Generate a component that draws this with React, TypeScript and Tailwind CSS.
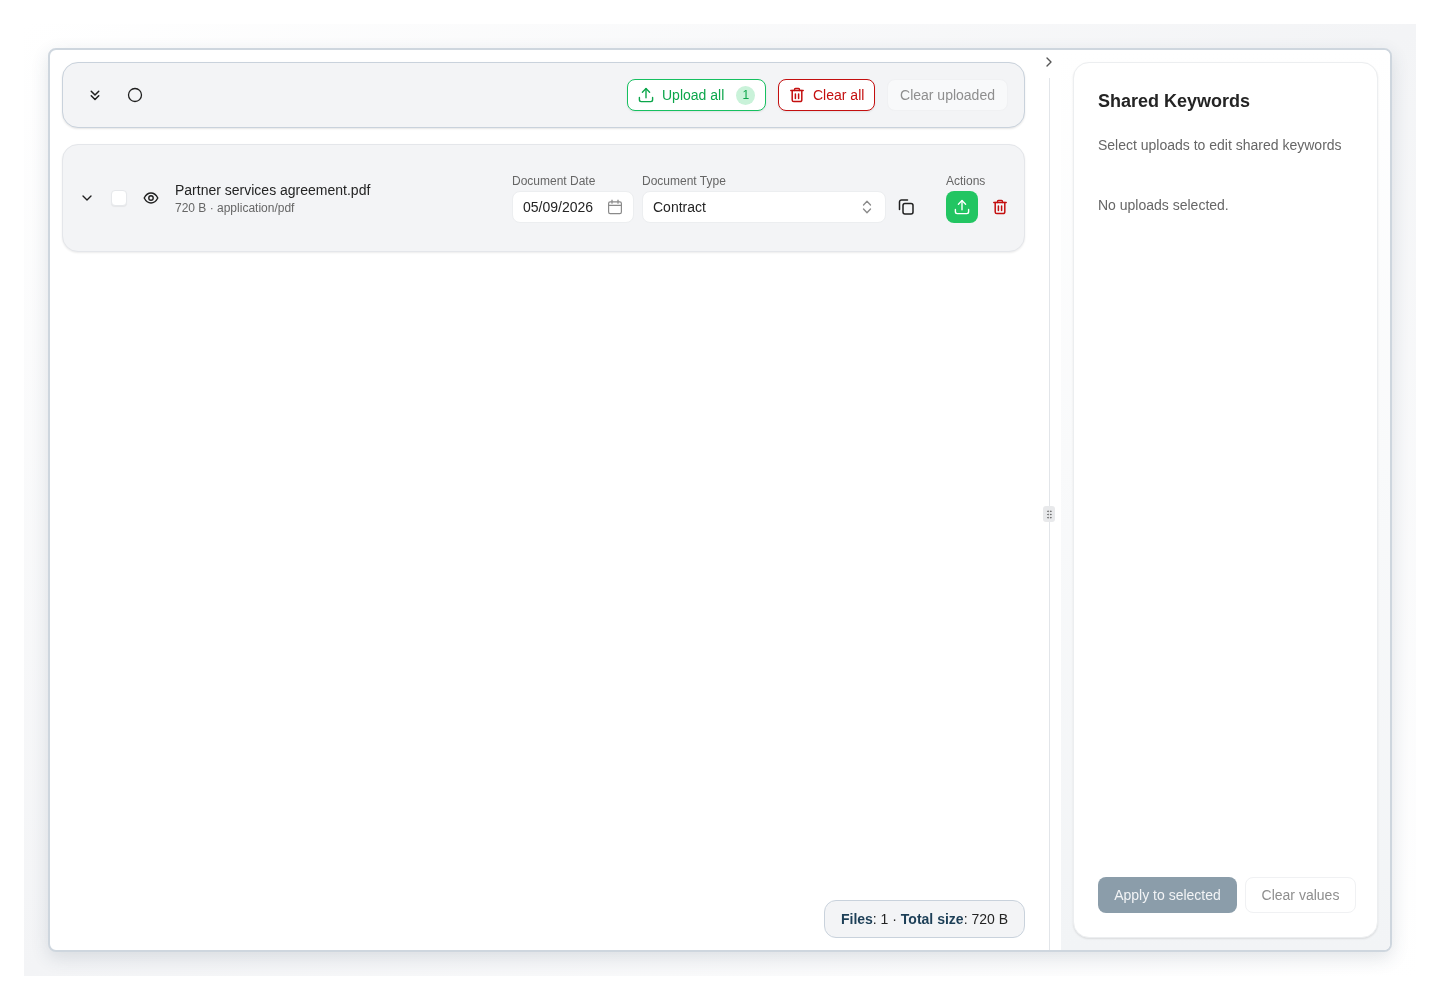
import {
  TbChevronDown,
  TbChevronRight,
  TbChevronsDown,
  TbGripVertical,
} from 'react-icons/tb';

function UploadIcon({ className }: { className: string }) {
  return (
    <svg viewBox="0 0 16 16" fill="none" stroke="currentColor" strokeWidth="1.4" strokeLinecap="round" strokeLinejoin="round" className={className}>
      <path d="M1.4 10.5v2.3a1.8 1.8 0 0 0 1.8 1.8h9.6a1.8 1.8 0 0 0 1.8-1.8v-2.3" />
      <path d="M8 10.8V1.6" />
      <path d="M4.4 5.2 8 1.6l3.6 3.6" />
    </svg>
  );
}

function TrashIcon({ className }: { className: string }) {
  return (
    <svg viewBox="0 0 16 16" fill="none" stroke="currentColor" strokeWidth="1.5" strokeLinecap="round" strokeLinejoin="round" className={className}>
      <path d="M1.8 3.5h12.4" />
      <path d="M5.5 3.5v-1a1 1 0 0 1 1-1h3a1 1 0 0 1 1 1v1" />
      <path d="M3.2 3.5V13a1.6 1.6 0 0 0 1.6 1.6h6.4a1.6 1.6 0 0 0 1.6-1.6V3.5" />
      <path d="M6.4 7v4.4" />
      <path d="M9.6 7v4.4" />
    </svg>
  );
}

function CopyIcon({ className }: { className: string }) {
  return (
    <svg viewBox="0 0 16 16" fill="none" stroke="currentColor" strokeWidth="1.5" strokeLinecap="round" strokeLinejoin="round" className={className}>
      <rect x="5" y="4.5" width="10" height="10.5" rx="2" />
      <path d="M1.5 10.5V3a2 2 0 0 1 2-2h6" />
    </svg>
  );
}

function CalendarIcon({ className }: { className: string }) {
  return (
    <svg viewBox="0 0 16 16" fill="none" stroke="currentColor" strokeWidth="1.2" strokeLinecap="round" strokeLinejoin="round" className={className}>
      <rect x="1.6" y="2.8" width="12.8" height="11.8" rx="1.6" />
      <path d="M1.6 6.4h12.8" />
      <path d="M5 1.2v3" />
      <path d="M11 1.2v3" />
    </svg>
  );
}

function SelectorIcon({ className }: { className: string }) {
  return (
    <svg viewBox="0 0 16 16" fill="none" stroke="currentColor" strokeWidth="1.3" strokeLinecap="round" strokeLinejoin="round" className={className}>
      <path d="M4.5 6 8 2.2 11.5 6" />
      <path d="M4.5 10 8 13.8l3.5-3.8" />
    </svg>
  );
}

function EyeIcon({ className }: { className: string }) {
  return (
    <svg viewBox="0 0 16 16" fill="none" stroke="currentColor" strokeWidth="1.4" strokeLinecap="round" strokeLinejoin="round" className={className}>
      <path d="M1.2 8C3 4.5 5.4 3 8 3s5 1.5 6.8 5C13 11.5 10.6 13 8 13S3 11.5 1.2 8Z" />
      <circle cx="8" cy="8" r="2.2" />
    </svg>
  );
}

function Toolbar() {
  return (
    <div className="flex h-[66px] shrink-0 items-center rounded-2xl border border-[#c9d2dc] bg-[#f3f4f6] pr-[16px] pl-[23px] shadow-[0_1px_2px_rgba(0,0,0,0.1)]">
      <TbChevronsDown className="h-[18px] w-[18px] text-[#1f1f1f]" />
      <svg viewBox="0 0 16 16" fill="none" stroke="currentColor" strokeWidth="1.3" className="ml-[23px] h-4 w-4 text-[#1f1f1f]">
        <circle cx="8" cy="8" r="6.5" />
      </svg>
      <button className="ml-auto flex h-8 w-[139px] items-center rounded-lg border border-[#16c060] bg-white pl-[10px] text-sm text-[#0ca64b] shadow-[0_1px_2px_rgba(0,0,0,0.08)]">
        <UploadIcon className="h-4 w-4" />
        <span className="ml-2">Upload all</span>
        <span className="ml-3 flex h-[19px] w-[19px] items-center justify-center rounded-full bg-[#c9f2d9] text-xs">1</span>
      </button>
      <button className="ml-3 flex h-8 w-[97px] items-center rounded-lg border border-[#c40f0f] bg-white pl-[10px] text-sm text-[#c40f0f] shadow-[0_1px_2px_rgba(0,0,0,0.08)]">
        <TrashIcon className="h-4 w-4" />
        <span className="ml-2">Clear all</span>
      </button>
      <button className="ml-3 flex h-[32px] w-[121px] items-center justify-center rounded-lg border border-[#f0f1f3] bg-[#f8f9fa] text-sm text-[#8e8e8e]">
        Clear uploaded
      </button>
    </div>
  );
}

function UploadRow() {
  return (
    <div className="mt-4 flex h-[108px] shrink-0 items-center rounded-2xl border border-[#e4e6ea] bg-[#f3f4f6] pr-[16px] pl-[16px] shadow-[0_1px_2px_rgba(0,0,0,0.08)]">
      <TbChevronDown className="h-4 w-4 text-[#1f1f1f]" />
      <span className="ml-4 h-4 w-4 rounded-[4px] border border-[#e6e8eb] bg-white shadow-[0_1px_1px_rgba(0,0,0,0.06)]" />
      <EyeIcon className="ml-4 h-4 w-4 text-[#1f1f1f]" />
      <div className="ml-4 w-[337px]">
        <div className="text-sm leading-[18px] text-[#242424]">Partner services agreement.pdf</div>
        <div className="mt-[1px] text-xs leading-[16px] text-[#666666]">720 B · application/pdf</div>
      </div>
      <div className="flex flex-col">
        <span className="mb-[2px] text-xs leading-[16px] text-[#666666]">Document Date</span>
        <div className="flex h-8 w-[122px] items-center justify-between rounded-lg border border-[#eceef0] bg-white pr-[10px] pl-[10px] text-sm text-[#242424]">
          05/09/2026
          <CalendarIcon className="h-4 w-4 text-[#8a8a8a]" />
        </div>
      </div>
      <div className="ml-2 flex flex-col">
        <span className="mb-[2px] text-xs leading-[16px] text-[#666666]">Document Type</span>
        <div className="flex h-8 w-[244px] items-center justify-between rounded-lg border border-[#eceef0] bg-white pr-[10px] pl-[10px] text-sm text-[#242424]">
          Contract
          <SelectorIcon className="h-4 w-4 text-[#8a8a8a]" />
        </div>
      </div>
      <CopyIcon className="mt-[18px] ml-3 h-4 w-4 text-[#1f1f1f]" />
      <div className="ml-[32px] flex flex-col">
        <span className="mb-[2px] text-xs leading-[16px] text-[#666666]">Actions</span>
        <div className="flex items-center">
          <button className="flex h-8 w-8 items-center justify-center rounded-lg bg-[#22c562] text-white">
            <UploadIcon className="h-4 w-4" />
          </button>
          <TrashIcon className="ml-[14px] h-4 w-4 text-[#c40f0f]" />
        </div>
      </div>
    </div>
  );
}

function KeywordsCard() {
  return (
    <div className="flex min-w-0 flex-1 flex-col rounded-2xl border border-[#eceef0] bg-white p-6 shadow-[0_1px_2px_rgba(0,0,0,0.1)]">
      <h2 className="text-lg leading-[28px] font-bold text-[#242424]">Shared Keywords</h2>
      <p className="mt-[20px] text-sm leading-[20px] text-[#666666]">Select uploads to edit shared keywords</p>
      <p className="mt-[40px] text-sm leading-[20px] text-[#666666]">No uploads selected.</p>
      <div className="mt-auto flex items-center gap-2">
        <button className="h-9 w-[139px] shrink-0 rounded-lg bg-[#8b9daa] text-sm text-[#f2f4f6]">Apply to selected</button>
        <button className="h-[36px] w-[111px] shrink-0 rounded-lg border border-[#f0f1f3] bg-white text-sm text-[#8e8e8e]">Clear values</button>
      </div>
    </div>
  );
}

export default function App() {
  return (
    <div className="h-[1000px] bg-white p-6 font-['Liberation_Sans',Arial,sans-serif]">
      <div className="h-full bg-gradient-to-br from-white via-[#f3f4f6] to-white p-6">
        <div className="flex h-full rounded-lg border-2 border-[#ced6de] bg-white shadow-[0_6px_18px_rgba(50,70,90,0.14)] will-change-transform">
          {/* Upload list */}
          <div className="flex w-[987px] shrink-0 flex-col p-3">
            <Toolbar />
            <UploadRow />
            <div className="mt-auto self-end rounded-xl border border-[#c9d2dc] bg-[#f3f4f6] px-4 py-[9px] text-sm leading-[18px] text-[#242424]">
              <b className="text-[#1d3f57]">Files</b>: 1 · <b className="text-[#1d3f57]">Total size</b>: 720 B
            </div>
          </div>

          {/* Divider */}
          <div className="relative flex w-6 shrink-0 flex-col items-center">
            <TbChevronRight className="mt-[4px] h-4 w-4 shrink-0 text-[#555555]" />
            <div className="mt-2 w-px flex-1 bg-[#e2e5e9]" />
            <div className="absolute top-[456px] left-1/2 flex h-4 w-3 -translate-x-1/2 items-center justify-center rounded-[3px] bg-[#e8e9eb]">
              <TbGripVertical className="h-[11px] w-[11px] text-[#666666]" />
            </div>
          </div>

          {/* Shared keywords */}
          <div className="flex min-w-0 flex-1 rounded-r-md bg-gradient-to-b from-white to-[#f2f4f6] p-3">
            <KeywordsCard />
          </div>
        </div>
      </div>
    </div>
  );
}
